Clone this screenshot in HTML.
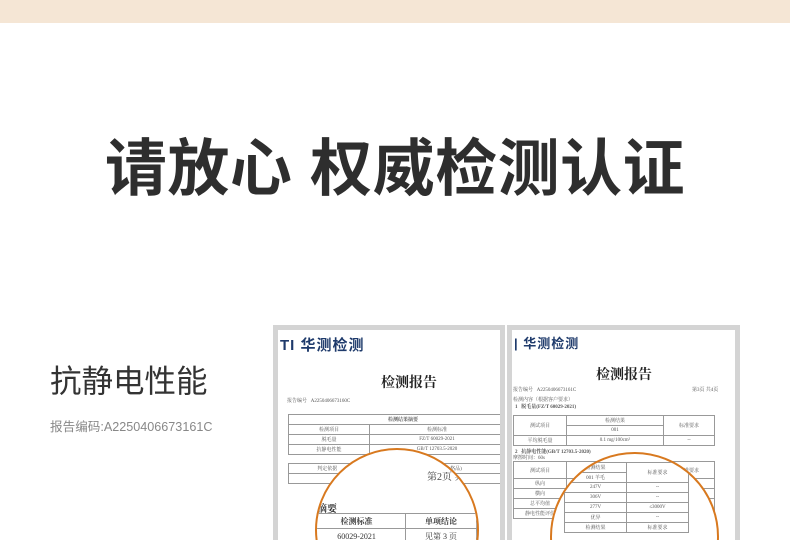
<!DOCTYPE html>
<html><head><meta charset="utf-8"><style>
html,body{margin:0;width:790px;height:540px;overflow:hidden}
body{background:#fff;position:relative;font-family:"Liberation Sans","Noto Sans CJK SC",sans-serif}
.top{position:absolute;left:0;top:0;width:790px;height:23px;background:#f5e6d5}
.title{position:absolute;left:0;width:790px;top:130px;text-align:center;font-size:62px;font-weight:bold;color:#2e2e2e;letter-spacing:0.5px;line-height:80px}
.h{position:absolute;left:50px;top:361px;font-size:31.5px;color:#333;line-height:40px}
.code{position:absolute;left:50px;top:416px;font-size:12.6px;color:#888}
.doc{position:absolute;top:325px;height:215px;background:#d4d4d4;overflow:hidden}
.paper{position:absolute;left:5px;top:5px;right:5px;bottom:0;background:#fff;overflow:hidden;font-family:"Liberation Serif","Noto Serif CJK SC",serif;color:#333}
.logo{position:absolute;left:2px;top:4px;font-size:15px;font-weight:bold;color:#1e3a6b;font-family:"Liberation Sans","Noto Sans CJK SC",sans-serif;letter-spacing:1px}
.rt{position:absolute;font-size:14px;font-weight:bold;color:#222}
.s{position:absolute;font-size:5px;color:#555;white-space:nowrap}
table{position:absolute;border-collapse:collapse;font-size:5px;color:#555}
td{border:1px solid #999;height:9px;text-align:center;padding:0}
.circle{position:absolute;border:2.5px solid #d8791f;border-radius:50%;background:#fff}
</style></head><body>
<div class="top"></div>
<div class="title">请放心 权威检测认证</div>
<div class="h">抗静电性能</div>
<div class="code">报告编码:A2250406673161C</div>

<div class="doc" style="left:273px;width:232px">
<div class="paper">
<div class="logo"><span style="color:#1e3a6b">TI</span> 华测检测</div>
<div class="rt" style="left:103px;top:42px">检测报告</div>
<div class="s" style="left:9px;top:67px">报告编号 &nbsp; A2250406673160C</div>
<table style="left:10px;top:84px;width:230px">
<tr><td colspan="3" style="font-weight:bold">检测结果摘要</td></tr>
<tr><td style="width:80px">检测项目</td><td>检测标准</td><td style="width:12px"></td></tr>
<tr><td>脱毛量</td><td>FZ/T 60029-2021</td><td></td></tr>
<tr><td>抗静电性能</td><td>GB/T 12703.5-2020</td><td></td></tr>
</table>
<table style="left:10px;top:133px;width:230px"><tr><td>判定依据</td><td>2001-2024(合格品)</td></tr><tr><td></td><td></td></tr></table>
<div class="circle" style="left:37px;top:118px;width:160px;height:160px;overflow:hidden">
<div style="position:absolute;top:18px;font-size:10px;color:#444;left:110px">第2页 共</div>
<div style="position:absolute;left:0;top:50px;font-size:10px;font-weight:bold">摘要</div>
<table style="left:-10px;top:63px;width:170px;font-size:8px;color:#333">
<tr><td style="font-weight:bold;height:14px">检测标准</td><td style="font-weight:bold">单项结论</td></tr>
<tr><td style="height:14px">60029-2021</td><td>见第 3 页</td></tr>
<tr><td style="height:14px">12703.5-2020</td><td>符合</td></tr></table>
</div>
</div></div>

<div class="doc" style="left:507px;width:233px">
<div class="paper">
<div class="logo" style="font-size:13px;top:3px"><span style="color:#1e3a6b">|</span> 华测检测</div>
<div class="rt" style="left:84px;top:34px">检测报告</div>
<div class="s" style="left:1px;top:56px">报告编号 &nbsp; A2250406673161C</div>
<div class="s" style="left:180px;top:56px">第3页 共4页</div>
<div class="s" style="left:1px;top:66px">检测内容（根据客户要求）</div>
<div class="s" style="left:3px;top:73px;font-weight:bold">1 &nbsp; 脱毛量(FZ/T 60029-2021)</div>
<table style="left:1px;top:85px;width:202px"><tr><td rowspan="2" style="width:52px">测试项目</td><td>检测结果</td><td rowspan="2" style="width:50px">标准要求</td></tr><tr><td>001</td></tr><tr><td>平均脱毛量</td><td>0.1 mg/100cm²</td><td>--</td></tr></table>
<div class="s" style="left:3px;top:118px;font-weight:bold">2 &nbsp; 抗静电性能(GB/T 12703.5-2020)</div>
<div class="s" style="left:1px;top:124px">摩擦时间：60s</div>
<table style="left:1px;top:131px;width:202px"><tr><td style="height:16px;width:52px">测试项目</td><td></td><td style="width:50px">标准要求</td></tr><tr><td>纵向</td><td></td><td></td></tr><tr><td>横向</td><td></td><td></td></tr><tr><td>总平均值</td><td></td><td></td></tr><tr><td>静电性能评价</td><td></td><td></td></tr></table>
<div class="circle" style="left:38px;top:122px;width:165px;height:165px;overflow:hidden">
<table style="left:12px;top:8px;width:125px"><tr><td>检测结果</td><td rowspan="2">标准要求</td></tr><tr><td>001 羊毛</td></tr><tr><td>247V</td><td>--</td></tr><tr><td>306V</td><td>--</td></tr><tr><td>277V</td><td>≤3000V</td></tr><tr><td>优异</td><td>--</td></tr></table>
<table style="left:12px;top:68px;width:125px"><tr><td>检测结果</td><td>标准要求</td></tr></table>
</div>
</div></div>
</body></html>
